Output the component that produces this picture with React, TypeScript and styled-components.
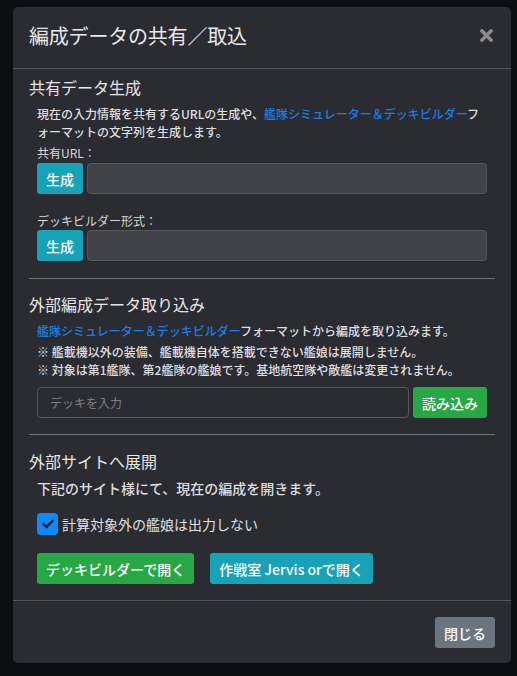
import React, { FC } from 'react';
import styled, { createGlobalStyle } from 'styled-components';
import { FaTimes, FaCheck } from 'react-icons/fa';

const GlobalStyle = createGlobalStyle`
  html, body {
    margin: 0;
    padding: 0;
    background: #0d0e11;
  }
  body {
    font-family: "Noto Sans CJK JP", "Noto Sans", sans-serif;
    color: #e2e2e4;
  }
`;

const Page = styled.div`
  width: 517px;
  height: 676px;
  padding: 7px 6px 0 13px;
  box-sizing: border-box;
  overflow: hidden;
`;

const Modal = styled.div`
  width: 498px;
  background: #2b2c31;
  border-radius: 5px;
`;

const Header = styled.div`
  height: 62px;
  display: flex;
  align-items: center;
  justify-content: space-between;
  padding: 0 15px 4px 16px;
  box-sizing: border-box;
  border-bottom: 1px solid #55565b;
`;

const Title = styled.h5`
  margin: 0;
  font-size: 20px;
  font-weight: 400;
  color: #e8e8ea;
  letter-spacing: -0.2px;
`;

const CloseButton = styled.button`
  border: 0;
  background: none;
  padding: 0;
  color: #8b8b8e;
  display: flex;
  cursor: pointer;
`;

const Body = styled.div`
  padding: 6px 16px 16px;
`;

const Section = styled.section``;

const SectionTitle = styled.h6`
  margin: 0;
  font-size: 16px;
  line-height: 24px;
  font-weight: 400;
  color: #e6e6e8;
`;

const Content = styled.div`
  padding: 0 8px;
`;

const Text = styled.p<{ $size?: number; $top?: number; $bottom?: number }>`
  margin: ${({ $top }) => $top ?? 0}px 0 ${({ $bottom }) => $bottom ?? 0}px;
  font-size: ${({ $size }) => $size ?? 12}px;
  line-height: ${({ $size }) => ($size ?? 12) * 1.5}px;
  font-weight: 500;
  color: #dedee0;
`;

const Link = styled.a`
  color: #1a7de8;
  text-decoration: none;
`;

const Label = styled.div<{ $top: number }>`
  margin-top: ${({ $top }) => $top}px;
  font-size: 12px;
  line-height: 18px;
  color: #d8d8da;
`;

const InputRow = styled.div<{ $top: number }>`
  display: flex;
  gap: 4px;
  margin-top: ${({ $top }) => $top}px;
  height: 31px;
`;

const Btn = styled.button<{ $variant: 'info' | 'success' | 'secondary' }>`
  height: 31px;
  padding: 0 9px;
  border: 0;
  border-radius: 3px;
  font-family: inherit;
  font-size: 14px;
  font-weight: 500;
  color: #fff;
  white-space: nowrap;
  flex-shrink: 0;
  background: ${({ $variant }) =>
    $variant === 'info' ? '#17a2b8' : $variant === 'success' ? '#28a745' : '#6c757d'};
`;

const FilledInput = styled.div`
  flex: 1;
  background: #424349;
  border: 1px solid #56575c;
  border-radius: 4px;
`;

const DeckInput = styled.input`
  flex: 1;
  min-width: 0;
  background: transparent;
  border: 1px solid #57585d;
  border-radius: 4px;
  padding: 0 12px;
  font-family: inherit;
  font-size: 12px;
  color: #ddd;
  &::placeholder {
    color: #7c7d82;
  }
`;

const Divider = styled.hr<{ $top: number; $bottom: number }>`
  margin: ${({ $top }) => $top}px 0 ${({ $bottom }) => $bottom}px;
  border: 0;
  border-top: 1px solid #717277;
`;

const CheckRow = styled.label`
  display: flex;
  align-items: center;
  gap: 4px;
  margin-top: 14px;
  font-size: 14px;
  color: #e0e0e2;
`;

const CheckBox = styled.span`
  width: 21px;
  height: 22px;
  border-radius: 4px;
  background: #0d8bfd;
  display: flex;
  align-items: center;
  justify-content: center;
  color: #1d1f24;
  svg {
    fill: #1d1f24;
  }
`;

const ButtonRow = styled.div`
  display: flex;
  gap: 16px;
  margin-top: 18px;
`;

const Footer = styled.div`
  border-top: 1px solid #55565b;
  padding: 16px 16px 15px;
  display: flex;
  justify-content: flex-end;
`;

const App: FC = () => {
  return (
    <>
      <GlobalStyle />
      <Page>
        <Modal>
          <Header>
            <Title>編成データの共有／取込</Title>
            <CloseButton aria-label="close">
              <FaTimes size={19} />
            </CloseButton>
          </Header>
          <Body>
            <Section>
              <SectionTitle>共有データ生成</SectionTitle>
              <Content>
                <Text $top={6}>
                  現在の入力情報を共有するURLの生成や、
                  <Link href="#">艦隊シミュレーター＆デッキビルダー</Link>
                  フォーマットの文字列を生成します。
                </Text>
                <Label $top={3}>共有URL：</Label>
                <InputRow $top={1}>
                  <Btn $variant="info">生成</Btn>
                  <FilledInput />
                </InputRow>
                <Label $top={18}>デッキビルダー形式：</Label>
                <InputRow $top={0}>
                  <Btn $variant="info">生成</Btn>
                  <FilledInput />
                </InputRow>
              </Content>
            </Section>
            <Divider $top={17} $bottom={13} />
            <Section>
              <SectionTitle>外部編成データ取り込み</SectionTitle>
              <Content>
                <Text $top={6} $bottom={3}>
                  <Link href="#">艦隊シミュレーター＆デッキビルダー</Link>
                  フォーマットから編成を取り込みます。
                </Text>
                <Text>※ 艦載機以外の装備、艦載機自体を搭載できない艦娘は展開しません。</Text>
                <Text>※ 対象は第1艦隊、第2艦隊の艦娘です。基地航空隊や敵艦は変更されません。</Text>
                <InputRow $top={8}>
                  <DeckInput placeholder="デッキを入力" />
                  <Btn $variant="success">読み込み</Btn>
                </InputRow>
              </Content>
            </Section>
            <Divider $top={16} $bottom={14} />
            <Section>
              <SectionTitle>外部サイトへ展開</SectionTitle>
              <Content>
                <Text $size={14} $top={5}>
                  下記のサイト様にて、現在の編成を開きます。
                </Text>
                <CheckRow>
                  <CheckBox>
                    <FaCheck size={12} color="#1d1f24" />
                  </CheckBox>
                  計算対象外の艦娘は出力しない
                </CheckRow>
                <ButtonRow>
                  <Btn $variant="success">デッキビルダーで開く</Btn>
                  <Btn $variant="info">作戦室 Jervis orで開く</Btn>
                </ButtonRow>
              </Content>
            </Section>
          </Body>
          <Footer>
            <Btn $variant="secondary">閉じる</Btn>
          </Footer>
        </Modal>
      </Page>
    </>
  );
};

export default App;
